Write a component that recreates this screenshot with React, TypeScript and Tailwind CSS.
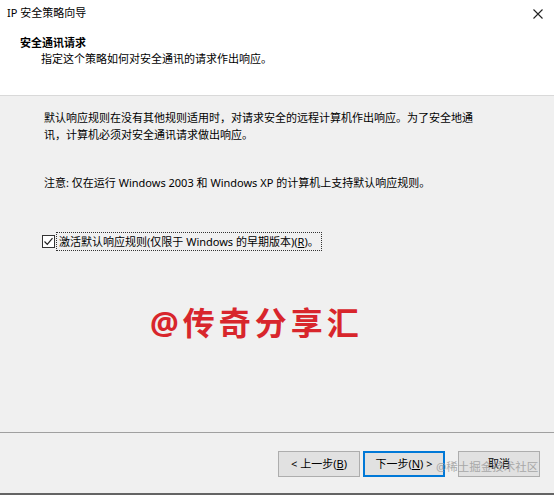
import React from "react";

const F = { fontFamily: '"Noto Sans", "Noto Sans CJK SC", sans-serif' };

function Btn({ children, primary }: { children: React.ReactNode; primary?: boolean }) {
  return (
    <div
      className={
        "w-[82px] h-[26px] flex items-center justify-center text-[11px] text-black bg-[#e1e1e1] " +
        (primary ? "border-2 border-[#0078d7]" : "border border-[#adadad]")
      }
    >
      {children}
    </div>
  );
}

export default function App() {
  return (
    <div style={F} className="w-[554px] h-[495px] bg-[#f0f0f0] relative overflow-hidden flex flex-col text-black">
      {/* header */}
      <div className="h-[96px] bg-white border-b border-[#d9d9d9] flex flex-col shrink-0">
        <div className="flex items-center justify-between pl-[7px] pr-[11px] pt-[4px] h-[22px]">
          <span className="text-[11px] leading-[14px]">IP 安全策略向导</span>
          <svg width="10" height="10" viewBox="0 0 10 10" className="mt-[2px]">
            <path d="M0.5 0.5 L9.5 9.5 M9.5 0.5 L0.5 9.5" stroke="#222" strokeWidth="1.1" fill="none" />
          </svg>
        </div>
        <div className="pl-[20px] pt-[14px] text-[11px] font-bold leading-[14px]">安全通讯请求</div>
        <div className="pl-[41px] pt-[2px] text-[11px] leading-[14px]">指定这个策略如何对安全通讯的请求作出响应。</div>
      </div>

      {/* body */}
      <div className="flex-1 flex flex-col pl-[44px] pt-[13px]">
        <p className="text-[11px] leading-[17px] w-[430px]">
          默认响应规则在没有其他规则适用时，对请求安全的远程计算机作出响应。为了安全地通讯，计算机必须对安全通讯请求做出响应。
        </p>
        <p className="text-[11px] leading-[17px] mt-[31px]">
          注意: 仅在运行 Windows 2003 和 Windows XP 的计算机上支持默认响应规则。
        </p>
        <div className="flex items-center mt-[41px] -ml-[2px]">
          <div className="w-[13px] h-[13px] border border-[#333] bg-white flex items-center justify-center shrink-0">
            <svg width="11" height="11" viewBox="0 0 11 11">
              <path d="M1.5 5.5 L4.3 8.3 L9.5 2.2" stroke="#222" strokeWidth="1.2" fill="none" />
            </svg>
          </div>
          <div className="ml-px border border-dotted border-[#333] px-[2px] h-[19px] flex items-center text-[11px] leading-[14px]">
            激活默认响应规则(仅限于 Windows 的早期版本)(<span className="underline">R</span>)。
          </div>
        </div>
        <div className="flex mt-[54px] pl-[106px]">
          <span className="text-[#d8262c] text-[32px] font-bold leading-[36px] tracking-[4px]">@传奇分享汇</span>
        </div>
      </div>

      {/* footer */}
      <div className="h-[61px] shrink-0 border-t border-[#a0a0a0] flex flex-col">
        <div className="flex justify-end pr-[14px] pt-[18px]">
          <Btn>&lt; 上一步(<span className="underline">B</span>)</Btn>
          <div className="w-[3px]" />
          <Btn primary>下一步(<span className="underline">N</span>) &gt;</Btn>
          <div className="w-[13px]" />
          <Btn>取消</Btn>
        </div>
      </div>
      <div className="h-[2px] bg-[#646464] shrink-0" />

      <div className="absolute left-[436px] top-[460px] text-[11.5px] leading-[14px] text-[#9a9a9a] opacity-80">
        @稀土掘金技术社区
      </div>
    </div>
  );
}
